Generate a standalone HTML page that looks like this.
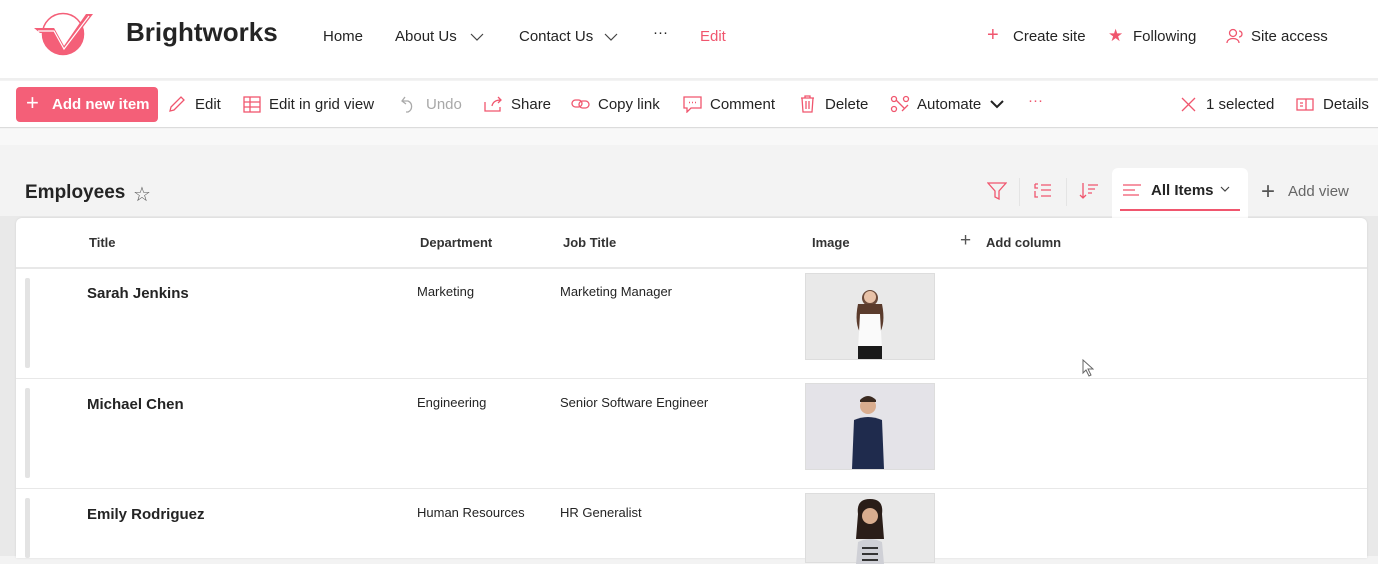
<!DOCTYPE html>
<html><head><meta charset="utf-8"><style>
*{box-sizing:border-box;margin:0;padding:0}
body{width:1378px;height:556px;overflow:hidden;background:#f3f3f3;font-family:"Liberation Sans",sans-serif;color:#242424;position:relative}
.a{position:absolute;white-space:nowrap}
.hdr{left:0;top:0;width:1378px;height:80px;background:#fff;border-bottom:2px solid #efefef}
.cmd{left:0;top:81px;width:1378px;height:47px;background:#fff;border-bottom:1px solid #dcdcdc}
.nav{font-size:15px;top:28px}
.c{font-size:15px;top:96px}
.pk{color:#f0566e}
.card{left:16px;top:218px;width:1351px;height:340px;background:#fff;border-radius:6px 6px 0 0;box-shadow:0 0 2px rgba(0,0,0,.1)}
.th{font-size:13px;top:235px;font-weight:bold;color:#333}
.line{left:16px;width:1351px;height:1px;background:#e8e8e8}
.bar{left:25px;width:5px;background:#e3e3e3;border-radius:2px}
.nm{font-size:15px;font-weight:bold}
.cl{font-size:13px}
.img{left:805px;width:130px;background:#e9e9e9;border:1px solid #ddd}
svg{position:absolute}
</style></head><body>
<div class="a" style="left:0;top:129px;width:1378px;height:16px;background:#f8f8f8"></div>
<div class="a" style="left:0;top:216px;width:1378px;height:340px;background:#e9e9e9"></div>
<div class="a hdr"></div>
<svg style="left:0;top:0" width="100" height="70" viewBox="0 0 100 70"><defs><clipPath id="lc"><polygon points="30,28 54,28 64,46 86,14 99,14 99,70 30,70"/></clipPath></defs><circle cx="63" cy="34" r="20.5" fill="#fff" stroke="#f45f78" stroke-width="1.5"/><circle cx="63" cy="34" r="21" fill="#f45f78" clip-path="url(#lc)"/><polygon points="34,28 54,28 64,46 86,14 93,14 64,52 52,33 40,33" fill="#f45f78"/><path d="M38 31 H54 L64 49 L89 16" fill="none" stroke="#fff" stroke-width="1.2"/></svg>
<div class="a" style="left:126px;top:17px;font-size:26px;font-weight:bold;color:#242424">Brightworks</div>
<div class="a nav" style="left:323px">Home</div>
<div class="a nav" style="left:395px">About Us</div>
<svg style="left:470px;top:32px" width="14" height="10"><path d="M1 2 L7 8 L13 2" fill="none" stroke="#444" stroke-width="1.2"/></svg>
<div class="a nav" style="left:519px">Contact Us</div>
<svg style="left:604px;top:32px" width="14" height="10"><path d="M1 2 L7 8 L13 2" fill="none" stroke="#444" stroke-width="1.2"/></svg>
<div class="a nav" style="left:653px;top:24px">···</div>
<div class="a nav pk" style="left:700px">Edit</div>
<div class="a nav pk" style="left:987px;top:24px;font-size:20px">+</div>
<div class="a nav" style="left:1013px">Create site</div>
<div class="a nav pk" style="left:1108px;top:26px;font-size:17px">★</div>
<div class="a nav" style="left:1133px">Following</div>
<svg style="left:1226px;top:28px" width="18" height="16"><circle cx="7" cy="5" r="3.5" fill="none" stroke="#f0566e" stroke-width="1.3"/><path d="M1 15 C1 9 13 9 13 15 M13 3 a3 3 0 0 1 0 6" fill="none" stroke="#f0566e" stroke-width="1.3"/></svg>
<div class="a nav" style="left:1251px">Site access</div>

<div class="a cmd"></div>
<div class="a" style="left:16px;top:87px;width:142px;height:35px;background:#f45f78;border-radius:4px"></div>
<div class="a" style="left:26px;top:90px;font-size:22px;color:#fff">+</div>
<div class="a c" style="left:52px;color:#fff;font-weight:bold">Add new item</div>
<svg style="left:168px;top:95px" width="18" height="18"><path d="M2 16 L3 12 L13 2 L16 5 L6 15 Z" fill="none" stroke="#f0566e" stroke-width="1.3"/></svg>
<div class="a c" style="left:195px">Edit</div>
<svg style="left:243px;top:96px" width="18" height="17"><rect x="1" y="1" width="16" height="15" fill="none" stroke="#f0566e" stroke-width="1.3"/><path d="M1 6H17M1 11H17M7 1V16" stroke="#f0566e" stroke-width="1.3"/></svg>
<div class="a c" style="left:269px">Edit in grid view</div>
<svg style="left:400px;top:96px" width="16" height="18"><path d="M5 1 L2 5 L6 8 M2 5 H8 A6 6 0 0 1 8 16 H6" fill="none" stroke="#aaa" stroke-width="1.3"/></svg>
<div class="a c" style="left:426px;color:#a8a8a8">Undo</div>
<svg style="left:484px;top:96px" width="20" height="16"><path d="M1 6 V15 H16 V11 M8 10 C9 5 13 4 17 4 M14 1 L17 4 L14 7" fill="none" stroke="#f0566e" stroke-width="1.3"/></svg>
<div class="a c" style="left:511px">Share</div>
<svg style="left:571px;top:98px" width="20" height="12"><rect x="1" y="2" width="10" height="7" rx="3.5" fill="none" stroke="#f0566e" stroke-width="1.3"/><rect x="8" y="3" width="10" height="7" rx="3.5" fill="none" stroke="#f0566e" stroke-width="1.3"/></svg>
<div class="a c" style="left:598px">Copy link</div>
<svg style="left:683px;top:96px" width="19" height="17"><path d="M1 1 H18 V12 H8 L4 16 V12 H1 Z" fill="none" stroke="#f0566e" stroke-width="1.3"/><path d="M6 6.5h1M9 6.5h1M12 6.5h1" stroke="#f0566e" stroke-width="1.5"/></svg>
<div class="a c" style="left:710px">Comment</div>
<svg style="left:800px;top:95px" width="15" height="18"><path d="M1 3 H14 M5 3 V1 H10 V3 M2 3 L3 17 H12 L13 3 M6 6 V14 M9 6 V14" fill="none" stroke="#f0566e" stroke-width="1.3"/></svg>
<div class="a c" style="left:825px">Delete</div>
<svg style="left:890px;top:95px" width="20" height="18"><circle cx="4" cy="4" r="2.5" fill="none" stroke="#f0566e" stroke-width="1.3"/><circle cx="16" cy="4" r="2.5" fill="none" stroke="#f0566e" stroke-width="1.3"/><circle cx="4" cy="14" r="2.5" fill="none" stroke="#f0566e" stroke-width="1.3"/><path d="M6 5 L14 13 M12 16 L18 10" fill="none" stroke="#f0566e" stroke-width="1.3"/></svg>
<div class="a c" style="left:917px">Automate</div>
<svg style="left:990px;top:99px" width="14" height="10"><path d="M1 2 L7 8 L13 2" fill="none" stroke="#222" stroke-width="2"/></svg>
<div class="a c pk" style="left:1028px;top:92px">···</div>
<svg style="left:1181px;top:97px" width="15" height="15"><path d="M1 1 L14 14 M14 1 L1 14" stroke="#f0566e" stroke-width="1.3"/></svg>
<div class="a c" style="left:1206px">1 selected</div>
<svg style="left:1296px;top:98px" width="18" height="13"><rect x="1" y="1" width="16" height="11" fill="none" stroke="#f0566e" stroke-width="1.3"/><path d="M10 1V12M4 5h3M4 8h3" stroke="#f0566e" stroke-width="1.3"/></svg>
<div class="a c" style="left:1323px">Details</div>

<div class="a" style="left:25px;top:182px;font-size:19px;font-weight:bold;color:#242424">Employees</div>
<div class="a" style="left:133px;top:182px;font-size:20px;color:#555">☆</div>
<svg style="left:987px;top:182px" width="20" height="18"><path d="M1 1 H19 L12 9 V17 L8 15 V9 Z" fill="none" stroke="#f0566e" stroke-width="1.3"/></svg>
<div class="a" style="left:1019px;top:178px;width:1px;height:28px;background:#e4e4e4"></div>
<svg style="left:1034px;top:183px" width="18" height="16"><path d="M1 1h3M1 1v4h3M7 2H17M7 7H17M1 8v6h3M7 13H17" fill="none" stroke="#f0566e" stroke-width="1.3"/></svg>
<div class="a" style="left:1066px;top:178px;width:1px;height:28px;background:#e4e4e4"></div>
<svg style="left:1079px;top:182px" width="20" height="18"><path d="M4 1V16M1 13L4 16L7 13M9 3H19M9 7H16M9 11H13" fill="none" stroke="#f0566e" stroke-width="1.3"/></svg>
<div class="a" style="left:1112px;top:168px;width:136px;height:54px;background:#fff;border-radius:6px 6px 0 0"></div>
<svg style="left:1122px;top:184px" width="20" height="14"><path d="M1 1H19M1 6H13M1 11H17" stroke="#f0566e" stroke-width="1.3"/></svg>
<div class="a" style="left:1151px;top:182px;font-size:15px;font-weight:bold">All Items</div>
<svg style="left:1220px;top:186px" width="10" height="7"><path d="M1 1L5 5L9 1" fill="none" stroke="#444" stroke-width="1.2"/></svg>
<div class="a" style="left:1120px;top:209px;width:120px;height:2px;background:#f0566e"></div>
<div class="a" style="left:1261px;top:178px;font-size:24px;font-weight:300;color:#555">+</div>
<div class="a" style="left:1288px;top:183px;font-size:15px;color:#666">Add view</div>

<div class="a card"></div>
<div class="a th" style="left:89px">Title</div>
<div class="a th" style="left:420px">Department</div>
<div class="a th" style="left:563px">Job Title</div>
<div class="a th" style="left:812px">Image</div>
<div class="a" style="left:960px;top:230px;font-size:19px;color:#555">+</div>
<div class="a th" style="left:986px">Add column</div>
<div class="a line" style="top:267px;height:2px"></div>

<div class="a bar" style="top:278px;height:90px"></div>
<div class="a nm" style="left:87px;top:285px">Sarah Jenkins</div>
<div class="a cl" style="left:417px;top:284px">Marketing</div>
<div class="a cl" style="left:560px;top:284px">Marketing Manager</div>
<div class="a img" style="top:273px;height:87px"><svg width="128" height="85"><circle cx="64" cy="24" r="8" fill="#6b4a3a"/><path d="M52 30 Q48 50 55 60 L73 60 Q80 50 76 30 Z" fill="#5a3b2c"/><path d="M54 40 H74 L76 75 H52 Z" fill="#fafafa"/><rect x="52" y="72" width="24" height="13" fill="#1a1a1a"/><circle cx="64" cy="23" r="6" fill="#e8c2a8"/></svg></div>
<div class="a line" style="top:378px"></div>

<div class="a bar" style="top:388px;height:90px"></div>
<div class="a nm" style="left:87px;top:396px">Michael Chen</div>
<div class="a cl" style="left:417px;top:395px">Engineering</div>
<div class="a cl" style="left:560px;top:395px">Senior Software Engineer</div>
<div class="a img" style="top:383px;height:87px;background:#e4e3e8"><svg width="128" height="85"><circle cx="62" cy="22" r="8" fill="#d9ad8f"/><path d="M54 16 Q62 8 70 16 L70 18 L54 18Z" fill="#3a2a20"/><path d="M48 36 Q62 30 76 36 L78 85 H46 Z" fill="#1f2b4d"/></svg></div>
<div class="a line" style="top:488px"></div>

<div class="a bar" style="top:498px;height:60px"></div>
<div class="a nm" style="left:87px;top:506px">Emily Rodriguez</div>
<div class="a cl" style="left:417px;top:505px">Human Resources</div>
<div class="a cl" style="left:560px;top:505px">HR Generalist</div>
<div class="a img" style="top:493px;height:70px"><svg width="128" height="70"><path d="M52 20 Q50 5 64 5 Q78 5 76 20 L78 45 H50 Z" fill="#2a1d18"/><circle cx="64" cy="22" r="8" fill="#d9ad8f"/><path d="M52 48 Q64 42 76 48 L78 70 H50 Z" fill="#cfd0d6"/><path d="M56 54H72M56 60H72M56 66H72" stroke="#333" stroke-width="2"/></svg></div>
<svg style="left:1082px;top:359px" width="12" height="18"><path d="M1 1 L1 14 L4 11 L7 17 L9 16 L6 10 L11 10 Z" fill="#fff" stroke="#666" stroke-width="1"/></svg>
</body></html>
